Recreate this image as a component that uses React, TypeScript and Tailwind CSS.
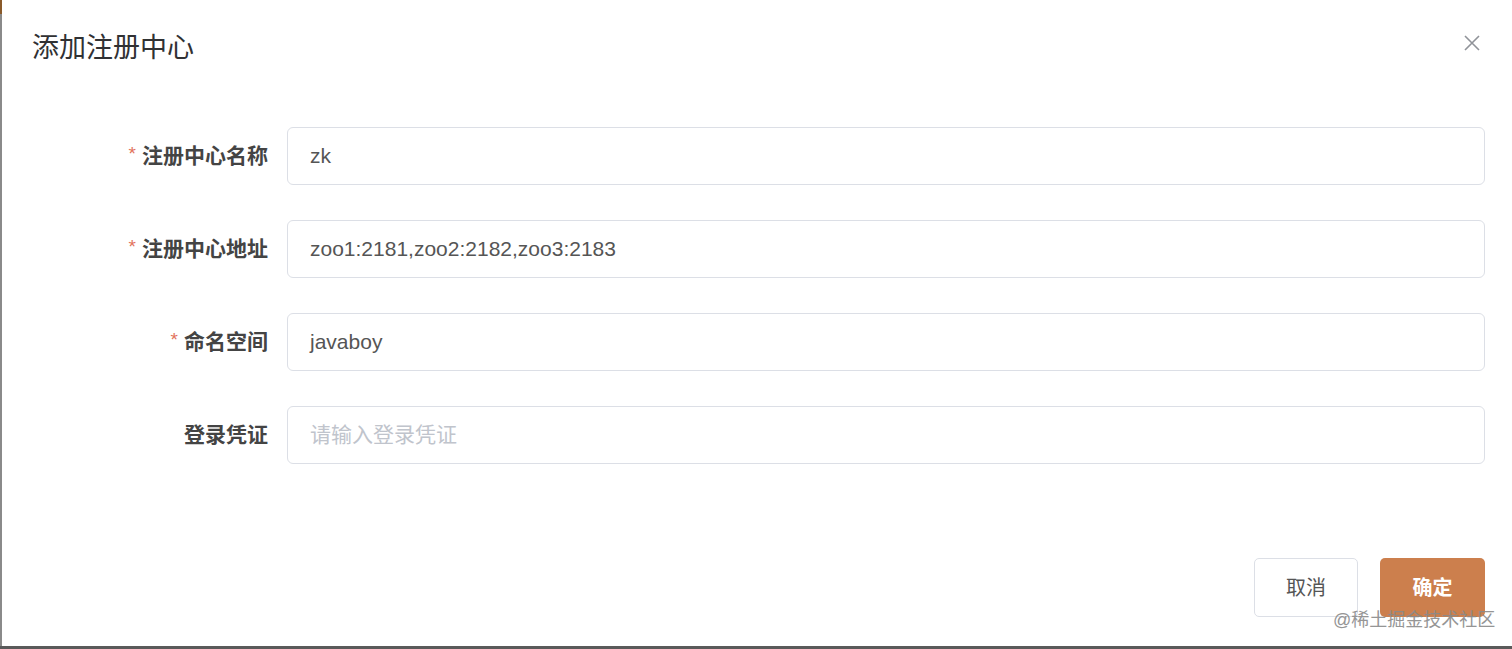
import React from "react";

const font = { fontFamily: '"Helvetica Neue", "Liberation Sans", "Noto Sans CJK SC", sans-serif' };

function Row({ label, required, value, placeholder }: { label: string; required?: boolean; value?: string; placeholder?: string }) {
  return (
    <div className="flex items-center h-[58px]">
      <div className="w-[266px] flex justify-end items-center text-[21px] font-bold text-[#444]">
        {required && <span className="text-[#e2725b] font-normal text-[19px] mr-[6px] mt-[-4px]">*</span>}
        <span>{label}</span>
      </div>
      <div className="ml-[19px] flex-1 mr-[27px] h-[58px] border border-[#dcdfe6] rounded-[6px] flex items-center pl-[22px] text-[21px]">
        {value ? <span className="text-[#555]">{value}</span> : <span className="text-[#c0c4cc]">{placeholder}</span>}
      </div>
    </div>
  );
}

export default function App() {
  return (
    <div className="w-[1512px] h-[649px] bg-white relative overflow-hidden" style={font}>
      <div className="absolute left-0 top-0 w-[2px] h-full bg-[#8a8a8a]" />
      <div className="absolute left-0 top-0 w-[2px] h-[14px] bg-[#8a5a2a]" />
      <div className="absolute left-0 bottom-0 w-full h-[3px] bg-[#5a5a5a]" />
      <div className="flex flex-col h-full pl-[2px]">
        <div className="flex items-center justify-between h-[96px] pl-[30px] pr-[30px]">
          <div className="text-[27px] text-[#303133]">添加注册中心</div>
          <svg width="16" height="16" viewBox="0 0 16 16" className="mt-[-10px] mr-[2px]">
            <path d="M1 1 L15 15 M15 1 L1 15" stroke="#909399" strokeWidth="1.6" />
          </svg>
        </div>
        <div className="flex flex-col gap-[35px] mt-[31px]">
          <Row label="注册中心名称" required value="zk" />
          <Row label="注册中心地址" required value="zoo1:2181,zoo2:2182,zoo3:2183" />
          <Row label="命名空间" required value="javaboy" />
          <Row label="登录凭证" placeholder="请输入登录凭证" />
        </div>
        <div className="flex justify-end gap-[22px] mt-[94px] pr-[27px]">
          <div className="w-[104px] h-[59px] border border-[#dcdfe6] rounded-[5px] flex items-center justify-center text-[20px] text-[#555]">取消</div>
          <div className="w-[105px] h-[59px] bg-[#cc7f4d] rounded-[5px] flex items-center justify-center text-[20px] text-white font-bold">确定</div>
        </div>
      </div>
      <div className="absolute left-[1333px] top-[607px] text-[18px] text-[#8a8a8a] opacity-90">@稀土掘金技术社区</div>
    </div>
  );
}
